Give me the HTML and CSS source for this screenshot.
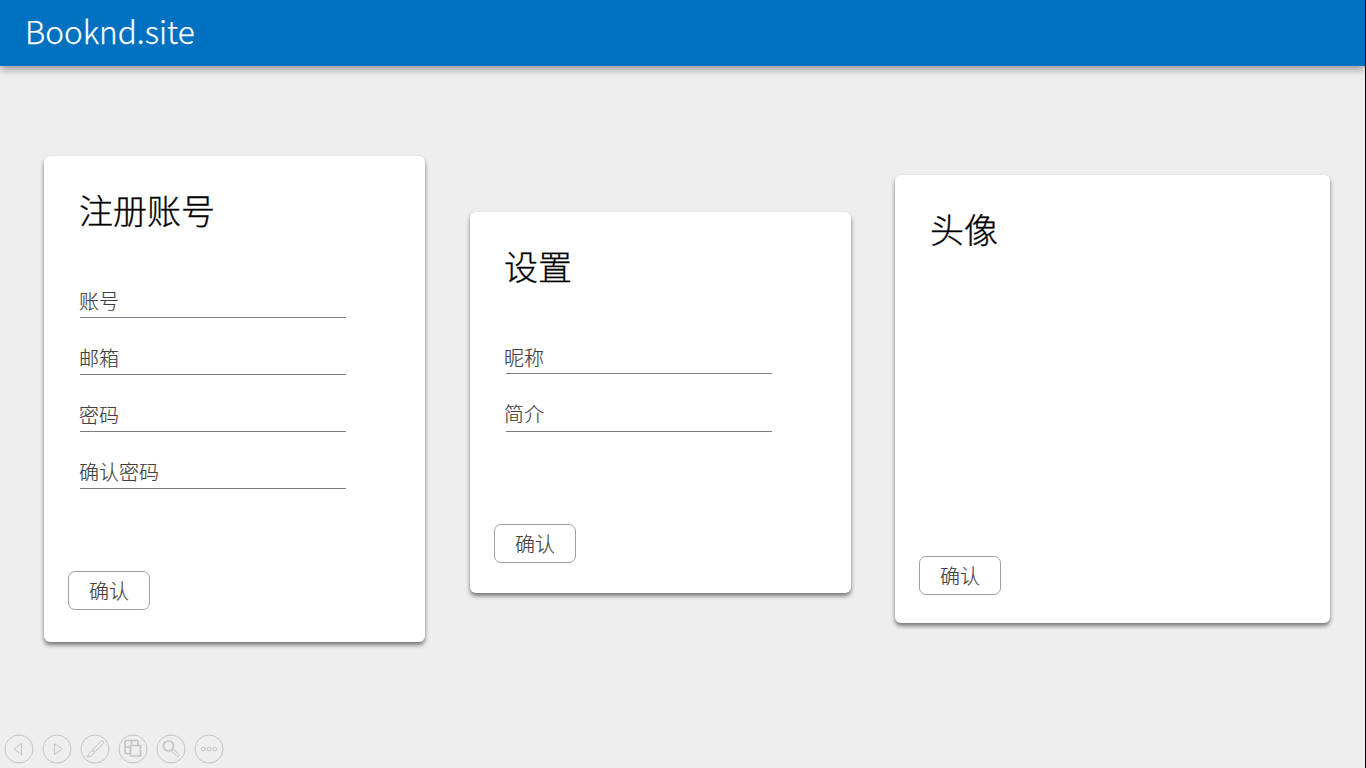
FILE: index.html
```html
<!DOCTYPE html>
<html lang="zh-CN">
<head>
<meta charset="utf-8">
<title>Booknd.site</title>
<link rel="stylesheet" href="styles.css">
</head>
<body>
<div class="page">
  <header class="topbar"><h1 class="brand">Booknd.site</h1></header>
  <main class="cards">
    <section class="card card-register">
      <h2 class="card-title">注册账号</h2>
      <div class="fields">
        <label class="field">账号</label>
        <label class="field">邮箱</label>
        <label class="field">密码</label>
        <label class="field">确认密码</label>
      </div>
      <button class="confirm">确认</button>
    </section>
    <section class="card card-settings">
      <h2 class="card-title">设置</h2>
      <div class="fields">
        <label class="field">昵称</label>
        <label class="field field-intro">简介</label>
      </div>
      <button class="confirm">确认</button>
    </section>
    <section class="card card-avatar">
      <h2 class="card-title">头像</h2>
      <button class="confirm">确认</button>
    </section>
  </main>
  <nav class="controls">
    <svg class="control" viewBox="0 0 30 30"><circle cx="15" cy="15" r="14"/><path d="M17.500 9.500v11L10 15z"/></svg>
    <svg class="control" viewBox="0 0 30 30"><circle cx="15" cy="15" r="14"/><path d="M12.500 9.500v11L20 15z"/></svg>
    <svg class="control" viewBox="0 0 30 30"><circle cx="15" cy="15" r="14"/><path d="M13 15.500L21.500 7q1.500-1 2 .500t-.5 2L15.500 17.500zM12 16.500l2.500 2.300-2 2.200q-2 2-5.500 2 1.500-1.500 1.800-3.200z"/></svg>
    <svg class="control" viewBox="0 0 30 30"><circle cx="15" cy="15" r="14"/><path class="thick" d="M12 19.500H8.500q-1.500 0-1.500-1.500V8q0-1.500 1.500-1.500h10q1.500 0 1.500 1.500v3M7 13h5M13.500 6.500v4"/><path class="thick" d="M12.500 11.500h10v10.500h-10z"/></svg>
    <svg class="control" viewBox="0 0 30 30"><circle cx="15" cy="15" r="14"/><circle class="thick" cx="12.500" cy="12" r="5"/><path d="M15.500 16.800l5.500 5.500q1 .8 1.800 0t0-1.800l-5.500-5.500"/></svg>
    <svg class="control" viewBox="0 0 30 30"><circle cx="15" cy="15" r="14"/><circle cx="9.300" cy="15" r="1.900"/><circle cx="15" cy="15" r="1.900"/><circle cx="20.700" cy="15" r="1.900"/></svg>
  </nav>
</div>
</body>
</html>
```
FILE: styles.css
```css
* { box-sizing: border-box; }
body { margin: 0; }
.page {
  display: flex;
  flex-direction: column;
  width: 1366px;
  height: 768px;
  overflow: hidden;
  border-right: 1px solid #000;
  background: #eee;
  font-family: "Noto Sans CJK SC", sans-serif;
  font-weight: 300;
}
.topbar {
  flex: none;
  height: 66px;
  padding-left: 25px;
  background: #0070c0;
  box-shadow: 0 3px 8px rgba(0, 0, 0, .4);
}
.brand {
  margin: 0;
  color: #fff;
  font-size: 31.5px;
  font-weight: 300;
  line-height: 61px;
  -webkit-text-stroke: .25px #fff;
}
.cards {
  display: flex;
  flex: 1;
  align-items: flex-start;
  gap: 45px;
  padding: 90px 0 0 44px;
}
.card {
  display: flex;
  flex-direction: column;
  align-items: flex-start;
  flex: none;
  width: 381px;
  padding: 29px 24px 32px;
  border-radius: 6px;
  background: #fff;
  box-shadow: 0 3px 4px rgba(0, 0, 0, .5);
}
.card-register { height: 486px; }
.card-settings { height: 381px; margin-top: 56px; padding-bottom: 30px; }
.card-avatar { width: 435px; height: 448px; margin: 19px 0 0 -1px; padding-bottom: 28px; }
.card-title {
  margin: 0 0 0 11px;
  color: #000;
  font-size: 34px;
  font-weight: 300;
  line-height: 50px;
  -webkit-text-stroke: .3px #000;
}
.card-settings .card-title { margin-left: 10px; }
.fields { margin: 26px 0 0 12px; }
.field {
  display: flex;
  align-items: flex-end;
  width: 266px;
  height: 57px;
  padding-bottom: 1px;
  border-bottom: 1px solid #7f7f7f;
  color: #404040;
  font-size: 20px;
  line-height: 30px;
  text-indent: -1px;
  -webkit-text-stroke: .15px #404040;
}
.card-settings .field { padding-bottom: 0; text-indent: -2px; }
.card-settings .field-intro { height: 58px; padding-bottom: 2px; }
.confirm {
  width: 82px;
  height: 39px;
  margin: auto 0 0;
  padding: 0;
  border: 1px solid #a0a0a0;
  border-radius: 7px;
  background: #fff;
  color: #404040;
  font: 300 20px/36px "Noto Sans CJK SC", sans-serif;
  -webkit-text-stroke: .15px #404040;
}
.controls {
  display: flex;
  gap: 8px;
  height: 34px;
  padding-left: 4px;
}
.control {
  width: 30px;
  height: 30px;
  fill: none;
  stroke: #c4c4c4;
  stroke-width: 1;
}
.thick { stroke-width: 1.7; }
```
